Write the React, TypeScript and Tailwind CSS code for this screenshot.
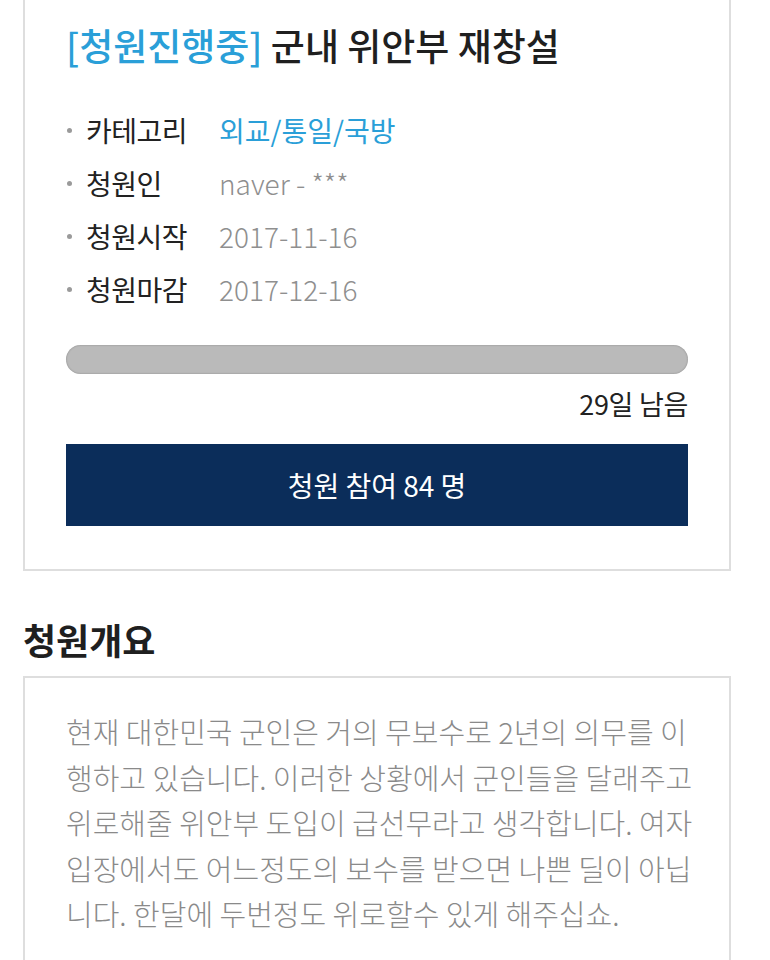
import React from "react";

const font = { fontFamily: '"Noto Sans CJK KR", "Noto Sans", sans-serif' };

const rows: { label: string; value: string; tone: "blue" | "gray" }[] = [
  { label: "카테고리", value: "외교/통일/국방", tone: "blue" },
  { label: "청원인", value: "naver - ***", tone: "gray" },
  { label: "청원시작", value: "2017-11-16", tone: "gray" },
  { label: "청원마감", value: "2017-12-16", tone: "gray" },
];

const lines = [
  "현재 대한민국 군인은 거의 무보수로 2년의 의무를 이",
  "행하고 있습니다. 이러한 상황에서 군인들을 달래주고",
  "위로해줄 위안부 도입이 급선무라고 생각합니다. 여자",
  "입장에서도 어느정도의 보수를 받으면 나쁜 딜이 아닙",
  "니다. 한달에 두번정도 위로할수 있게 해주십쇼.",
];

export default function App() {
  return (
    <div className="h-[960px] w-[770px] overflow-hidden bg-white" style={font}>
      {/* Petition summary card */}
      <div className="ml-[23px] w-[708px] border-x-2 border-b-2 border-[#dedede] bg-white px-[41px] pb-[43px] pt-[23px]">
        <h1 className="whitespace-nowrap text-[37px] font-medium leading-[44px] text-[#1f1f1f]">
          <span className="text-[#2a9fd8]">[청원진행중]</span> 군내 위안부 재창설
        </h1>
        <ul className="mt-[45px] space-y-[17px]">
          {rows.map((r) => (
            <li key={r.label} className="flex items-center text-[28px] leading-[36px]">
              <span className="ml-[1px] mr-[14px] h-[5px] w-[5px] rounded-full bg-[#9a9a9a]" />
              <span className="w-[133px] tracking-[-0.5px] text-[#222]">{r.label}</span>
              <span className={r.tone === "blue" ? "text-[#2a9fd8]" : "font-light text-[#8f8f8f]"}>
                {r.value}
              </span>
            </li>
          ))}
        </ul>
        <div className="mt-[38px] h-[29px] w-full rounded-full bg-[#bababa] shadow-[inset_0_0_2px_rgba(0,0,0,0.3)]" />
        <div className="mt-[13px] text-right text-[27px] leading-[34px] tracking-[-0.3px] text-[#222]">29일 남음</div>
        <button className="mt-[23px] flex h-[82px] w-full items-center justify-center bg-[#0b2d5a] text-[28px] text-white">
          청원 참여 84 명
        </button>
      </div>

      {/* Overview */}
      <h2 className="ml-[23px] mt-[46px] text-[36px] font-bold leading-[44px] text-[#1f1f1f]">청원개요</h2>
      <div className="ml-[23px] mt-[15px] h-[320px] w-[708px] border-2 border-[#dedede] bg-white px-[41px] pt-[31px]">
        <p className="text-[29px] font-light leading-[45.5px] text-[#8a8a8a]">
          {lines.map((l) => (
            <span key={l} className="block whitespace-nowrap">
              {l}
            </span>
          ))}
        </p>
      </div>
    </div>
  );
}
